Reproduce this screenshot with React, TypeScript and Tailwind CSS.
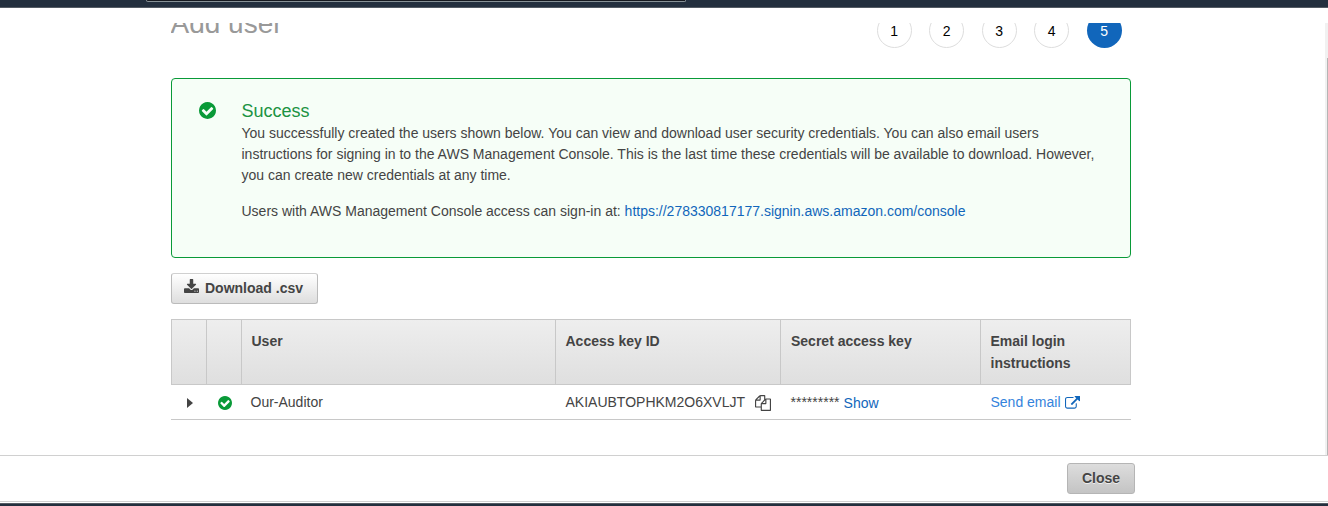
import React from 'react';

const CHECK =
  'M1412 734q0-28-18-46l-91-90q-19-19-45-19t-45 19l-408 407-226-226q-19-19-45-19t-45 19l-91 90q-18 18-18 46 0 27 18 45l362 362q19 19 45 19 27 0 46-19l543-543q18-18 18-45zm252 162q0 209-103 385.500t-279.500 279.500-385.500 103-385.500-103-279.500-279.500-103-385.500 103-385.500 279.500-279.500 385.500-103 385.500 103 279.500 279.500 103 385.500z';
const DOWNLOAD =
  'M1344 1344q0-26-19-45t-45-19-45 19-19 45 19 45 45 19 45-19 19-45zm256 0q0-26-19-45t-45-19-45 19-19 45 19 45 45 19 45-19 19-45zm128-224v320q0 40-28 68t-68 28h-1472q-40 0-68-28t-28-68v-320q0-40 28-68t68-28h465l135 136q58 56 136 56t136-56l136-136h464q40 0 68 28t28 68zm-325-569q17 41-14 70l-448 448q-18 19-45 19t-45-19l-448-448q-31-29-14-70 17-39 59-39h256v-448q0-26 19-45t45-19h256q26 0 45 19t19 45v448h256q42 0 59 39z';
const COPY =
  'M1696 384q40 0 68 28t28 68v1216q0 40-28 68t-68 28h-960q-40 0-68-28t-28-68v-288h-544q-40 0-68-28t-28-68v-672q0-40 20-88t48-76l408-408q28-28 76-48t88-20h416q40 0 68 28t28 68v328q68-40 128-40h416zm-544 213l-299 299h299v-299zm-640-384l-299 299h299v-299zm196 647l316-316v-416h-384v416q0 40-28 68t-68 28h-416v640h512v-256q0-40 20-88t48-76zm956 804v-1152h-384v416q0 40-28 68t-68 28h-416v640h896z';
const EXTERNAL =
  'M1408 928v320q0 119-84.500 203.500t-203.500 84.500h-832q-119 0-203.500-84.500t-84.500-203.500v-832q0-119 84.500-203.500t203.500-84.500h704q14 0 23 9t9 23v64q0 14-9 23t-23 9h-704q-66 0-113 47t-47 113v832q0 66 47 113t113 47h832q66 0 113-47t47-113v-320q0-14 9-23t23-9h64q14 0 23 9t9 23zm384-864v512q0 26-19 45t-45 19-45-19l-176-176-652 652q-10 10-23 10t-23-10l-114-114q-10-10-10-23t10-23l652-652-176-176q-19-19-19-45t19-45 45-19h512q26 0 45 19t19 45z';

function Icon({ d, box, className }: { d: string; box: string; className: string }) {
  return (
    <svg viewBox={box} className={className} fill="currentColor" aria-hidden="true">
      <path d={d} />
    </svg>
  );
}

function Steps() {
  return (
    <ol className="flex gap-[17.5px] pr-[9.4px]">
      {[1, 2, 3, 4, 5].map((n) => (
        <li
          key={n}
          className={
            'flex h-[35px] w-[35px] items-center justify-center rounded-full text-sm ' +
            (n === 5 ? 'bg-[#1166bb] text-white' : 'border border-[#dddddd] bg-white text-black')
          }
        >
          {n}
        </li>
      ))}
    </ol>
  );
}

function Alert() {
  return (
    <section className="mt-[30px] flex h-[180px] rounded-[4px] border border-[#099a38] bg-[#f6fef7] pl-[27px]">
      <Icon d={CHECK} box="128 128 1536 1536" className="mt-[22.5px] h-[17px] w-[17px] shrink-0 text-[#099a38]" />
      <div className="ml-[25.5px] w-[870px] pt-[21px]">
        <h2 className="mb-px h-[22px] text-lg leading-[22px] text-[#1b9343]">Success</h2>
        <p className="leading-[21px]">
          You successfully created the users shown below. You can view and download user security credentials. You can also email users
          <br />
          instructions for signing in to the AWS Management Console. This is the last time these credentials will be available to download. However,
          <br />
          you can create new credentials at any time.
        </p>
        <p className="mt-[15px] leading-[21px]">
          Users with AWS Management Console access can sign-in at:{' '}
          <a className="text-[#1166bb]">https://278330817177.signin.aws.amazon.com/console</a>
        </p>
      </div>
    </section>
  );
}

const GRID = 'grid grid-cols-[35px_35px_314px_225px_200px_149px]';

function UserTable() {
  return (
    <div className="mt-[15px]">
      <div className={GRID + ' h-[66px] divide-x divide-[#c8c8c8] border border-[#c8c8c8] bg-linear-to-b from-[#eeeeee] to-[#dfdfdf] font-bold leading-[22px]'}>
        <div />
        <div />
        <div className="pl-[9.5px] pt-[10px]">User</div>
        <div className="pl-[9.5px] pt-[10px]">Access key ID</div>
        <div className="pl-[10px] pt-[10px]">Secret access key</div>
        <div className="pl-[9.5px] pt-[10px]">
          Email login
          <br />
          instructions
        </div>
      </div>
      <div className={GRID + ' h-[35px] items-center border-b border-[#c8c8c8] pl-px leading-[32px]'}>
        <svg viewBox="0 0 6 10" className="ml-[15px] mt-px h-[10px] w-[6px]" fill="#444444">
          <path d="M0 0L6 5L0 10Z" />
        </svg>
        <Icon d={CHECK} box="128 128 1536 1536" className="ml-[11px] mt-px h-[14px] w-[14px] text-[#099a38]" />
        <div className="pl-[8.5px]">Our-Auditor</div>
        <div className="flex items-center pl-[9.5px]">
          AKIAUBTOPHKM2O6XVLJT
          <Icon d={COPY} box="0 0 1792 1792" className="ml-[10px] mt-px h-4 w-4" />
        </div>
        <div className="flex gap-1 pl-[9.5px]">
          <span className="pt-px">*********</span>
          <a className="pt-[2px] text-[#1166bb]">Show</a>
        </div>
        <a className="flex items-center pl-[9.5px] text-[#3483dc]">
          Send email
          <Icon d={EXTERNAL} box="0 64 1792 1472" className="ml-[4px] h-[13px] w-[15px] text-[#1166bb]" />
        </a>
      </div>
    </div>
  );
}

export default function App() {
  return (
    <div className="flex h-[506px] w-[1328px] flex-col overflow-hidden bg-white font-['Liberation_Sans',Arial,sans-serif] text-sm text-[#444444]">
      <header className="h-2 shrink-0 border-b border-[#545b64] bg-[#232f3e] pl-[146px]">
        <div className="h-[2px] w-[540px] rounded-b-[2px] border-x border-b border-[#879196] bg-[#16191f]" />
      </header>
      <div className="mt-[15px] flex h-[432px] shrink-0 overflow-hidden">
        <main className="ml-[171px] w-[960px]">
          <div className="flex h-[25px] items-end justify-between overflow-hidden">
            <h1 className="-ml-[0.5px] pb-[8px] text-[28px] leading-[32px] text-[#999999]">Add user</h1>
            <Steps />
          </div>
          <Alert />
          <button className="mt-[15px] flex h-[31px] w-[147px] items-center rounded-[3px] border border-[#bbbbbb] border-t-[#d0d0d0] bg-linear-to-b from-white to-[#dedede] pb-[2px] pl-[12px] font-bold">
            <Icon d={DOWNLOAD} box="64 0 1664 1536" className="mb-[3px] mr-[6px] h-[14px] w-[15px]" />
            Download .csv
          </button>
          <UserTable />
        </main>
        <div className="ml-auto w-[3px] bg-[#f1f1f1] pl-[2px] pt-[35px]">
          <div className="h-full bg-[#b5b5b5]" />
        </div>
      </div>
      <footer className="flex h-[47px] shrink-0 items-start justify-end border-y border-[#d0d0d0] pr-[193px] pt-[7px]">
        <button className="h-[31px] w-[68px] rounded-[3px] border border-[#b5b5b5] bg-linear-to-b from-[#dddddd] to-[#c4c4c4] pb-[2px] font-bold [text-shadow:0_1px_0_#eeeeee]">
          Close
        </button>
      </footer>
      <div className="mt-px h-[3px] shrink-0 border-t border-[#545b64] bg-[#232f3e]" />
    </div>
  );
}
